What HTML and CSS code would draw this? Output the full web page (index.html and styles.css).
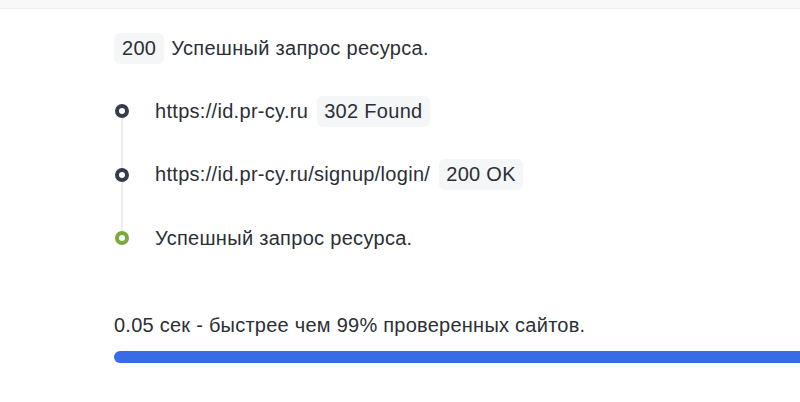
FILE: index.html
```html
<!DOCTYPE html>
<html lang="ru">
<head>
<meta charset="utf-8">
<link rel="stylesheet" href="styles.css">
</head>
<body>
<div class="topbar"></div>
<div class="content">
  <div class="status">
    <span class="badge badge-code">200</span>
    <span>Успешный запрос ресурса.</span>
  </div>
  <ul class="timeline">
    <li class="item">
      <span class="dot"></span>
      <span class="url">https://id.pr-cy.ru</span>
      <span class="badge">302 Found</span>
    </li>
    <li class="item">
      <span class="dot"></span>
      <span class="url">https://id.pr-cy.ru/signup/login/</span>
      <span class="badge">200 OK</span>
    </li>
    <li class="item">
      <span class="dot dot-ok"></span>
      <span class="url">Успешный запрос ресурса.</span>
    </li>
  </ul>
  <div class="speed">0.05 сек - быстрее чем 99% проверенных сайтов.</div>
  <div class="bar"></div>
</div>
</body>
</html>
```
FILE: styles.css
```css
html, body {
  margin: 0;
  padding: 0;
  background: #ffffff;
  overflow: hidden;
}
body {
  font-family: "Liberation Sans", Arial, sans-serif;
  font-size: 20px;
  letter-spacing: 0.3px;
  color: #2c2f35;
}
.topbar {
  height: 8px;
  background: #f7f8fa;
  border-bottom: 1px solid #eceef2;
}
.content {
  padding: 24px 0 0 114px;
}
.status {
  display: flex;
  align-items: center;
  gap: 7px;
  height: 31px;
}
.badge {
  display: inline-flex;
  align-items: center;
  height: 31px;
  padding: 0 7px;
  background: #f5f6f8;
  border-radius: 6px;
}
.badge-code {
  padding: 0 8px;
}
.timeline {
  list-style: none;
  margin: 31px 0 0 0;
  padding: 0;
  display: flex;
  flex-direction: column;
  gap: 31.5px;
  position: relative;
}
.timeline::before {
  content: "";
  position: absolute;
  left: 7px;
  top: 16px;
  bottom: 16px;
  width: 2px;
  background: #eceef1;
}
.item {
  display: flex;
  align-items: center;
  height: 32px;
  position: relative;
}
.dot {
  box-sizing: border-box;
  width: 14px;
  height: 14px;
  margin-left: 1px;
  margin-right: 26px;
  border: 4px solid #353d4b;
  border-radius: 50%;
  background: #ffffff;
  flex: none;
}
.dot-ok {
  border-color: #7aa93c;
}
.url {
  margin-right: 9px;
}
.speed {
  margin-top: 59px;
  line-height: 24px;
  letter-spacing: 0.25px;
}
.bar {
  margin-top: 14px;
  height: 12px;
  width: calc(100% + 30px);
  background: #386be8;
  border-radius: 6px;
}
```
